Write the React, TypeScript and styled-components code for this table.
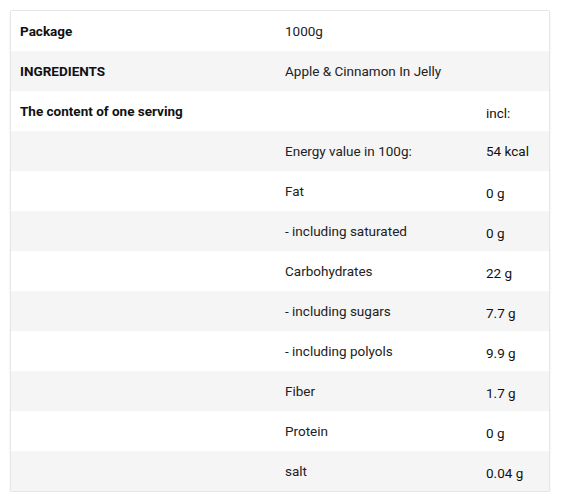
import React from "react";
import styled, { createGlobalStyle } from "styled-components";

const Global = createGlobalStyle`
  html, body { margin: 0; padding: 0; background: #ffffff; }
  body { font-family: Roboto, "Liberation Sans", Arial, sans-serif; }
`;

const Page = styled.div`
  padding: 10px 11px 0 10px;
`;

const Table = styled.div`
  width: 540px;
  border: 1px solid #e6e6e6;
  border-radius: 2px;
  box-shadow: 0 1px 2px rgba(0, 0, 0, 0.08);
  background: #fff;
  box-sizing: border-box;
`;

const Row = styled.div<{ $alt: boolean }>`
  display: grid;
  grid-template-columns: 274px 201px 1fr;
  height: 40px;
  align-items: center;
  background: ${(p) => (p.$alt ? "#f5f5f5" : "#ffffff")};
  font-size: 13.5px;
  color: #1a1a1a;
`;

const Label = styled.div`
  padding-left: 9px;
  font-weight: 700;
  color: #111;
`;

const Name = styled.div`
  color: #222;
  padding-bottom: 1px;
`;

const Value = styled.div<{ $low: boolean }>`
  padding-left: 0;
  padding-top: ${(p) => (p.$low ? "4px" : "0")};
  color: #111;
`;

type R = { label?: string; name?: string; value?: string; low?: boolean };

const rows: R[] = [
  { label: "Package", name: "1000g" },
  { label: "INGREDIENTS", name: "Apple & Cinnamon In Jelly" },
  { label: "The content of one serving", value: "incl:", low: true },
  { name: "Energy value in 100g:", value: "54 kcal" },
  { name: "Fat", value: "0 g", low: true },
  { name: "- including saturated", value: "0 g", low: true },
  { name: "Carbohydrates", value: "22 g", low: true },
  { name: "- including sugars", value: "7.7 g", low: true },
  { name: "- including polyols", value: "9.9 g", low: true },
  { name: "Fiber", value: "1.7 g", low: true },
  { name: "Protein", value: "0 g", low: true },
  { name: "salt", value: "0.04 g", low: true },
];

export default function App() {
  return (
    <>
      <Global />
      <Page>
        <Table>
          {rows.map((r, i) => (
            <Row key={i} $alt={i % 2 === 1}>
              <Label>{r.label ?? ""}</Label>
              <Name>{r.name ?? ""}</Name>
              <Value $low={!!r.low}>{r.value ?? ""}</Value>
            </Row>
          ))}
        </Table>
      </Page>
    </>
  );
}
